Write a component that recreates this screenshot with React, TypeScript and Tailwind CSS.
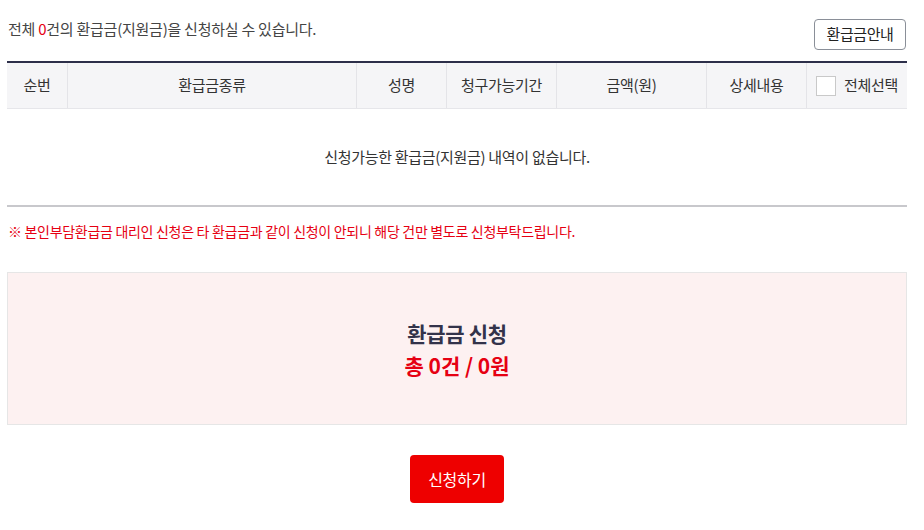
import React from 'react'

const columns = [
  { label: '순번', width: 'w-[60px]' },
  { label: '환급금종류', width: 'w-[289px]' },
  { label: '성명', width: 'w-[90px]' },
  { label: '청구가능기간', width: 'w-[110px]' },
  { label: '금액(원)', width: 'w-[150px]' },
  { label: '상세내용', width: 'w-[100px]' },
]

export default function App() {
  return (
    <div className="w-[924px] h-[530px] bg-white font-['Noto_Sans_CJK_KR',sans-serif] text-[#333]">
      <div className="ml-[7px] w-[900px]">
        {/* Top bar */}
        <div className="flex items-start justify-between pt-[19px] h-[61px]">
          <p className="text-[15px] tracking-[-0.25px] leading-[20px] pl-[1px] text-[#444]">
            전체 <span className="text-[#e60012]">0</span>건의 환급금(지원금)을 신청하실 수 있습니다.
          </p>
          <button className="h-[31px] w-[92px] border border-[#8a8f98] rounded-[4px] text-[15px] tracking-[-0.4px] text-[#222] bg-white mr-[1px]">
            환급금안내
          </button>
        </div>

        {/* Table */}
        <div className="border-t-2 border-[#2d2f4a]">
          <div className="flex h-[46px] bg-[#f5f5f7] border-b border-[#e6e6ea] text-[15px] tracking-[-0.3px] text-[#333]">
            {columns.map((c, i) => (
              <div
                key={c.label}
                className={`${c.width} flex items-center justify-center ${i > 0 ? 'border-l border-[#e4e4e8]' : ''}`}
              >
                {c.label}
              </div>
            ))}
            <div className="flex-1 flex items-center justify-center gap-[8px] border-l border-[#e4e4e8]">
              <span className="w-[20px] h-[20px] border border-[#c9c9c9] bg-white" />
              <span>전체선택</span>
            </div>
          </div>
          <div className="h-[98px] flex items-center justify-center text-[15px] tracking-[-0.3px] text-[#333] border-b-2 border-[#c8c8cc] pt-[1px]">
            신청가능한 환급금(지원금) 내역이 없습니다.
          </div>
        </div>

        {/* Notice */}
        <p className="mt-[14px] text-[14px] tracking-[-0.3px] text-[#e60012] pl-[1px] leading-[20px]">
          ※ 본인부담환급금 대리인 신청은 타 환급금과 같이 신청이 안되니 해당 건만 별도로 신청부탁드립니다.
        </p>

        {/* Summary */}
        <div className="mt-[31px] h-[153px] border border-[#e6e6e6] bg-[#fdf1f1] flex flex-col items-center justify-center gap-[2px]">
          <p className="text-[21px] font-bold tracking-[-0.3px] text-[#33334a] leading-[30px]">환급금 신청</p>
          <p className="text-[21px] font-bold tracking-[0px] text-[#e60012] leading-[30px]">총 0건 / 0원</p>
        </div>

        {/* Submit */}
        <div className="flex justify-center mt-[30px]">
          <button className="w-[94px] h-[48px] rounded-[4px] bg-[#ee0000] text-white text-[16px] tracking-[-0.3px]">
            신청하기
          </button>
        </div>
      </div>
    </div>
  )
}
